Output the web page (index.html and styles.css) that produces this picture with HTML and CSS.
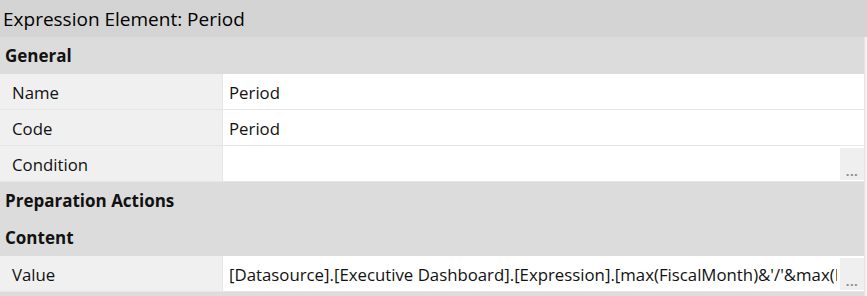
FILE: index.html
```html
<!DOCTYPE html>
<html>
<head>
<meta charset="utf-8">
<link rel="stylesheet" href="styles.css">
</head>
<body>
<div class="title">Expression Element: Period</div>
<div class="body">
  <div class="grid">
    <div class="section">General</div>
    <div class="row"><div class="label">Name</div><div class="value">Period</div></div>
    <div class="row"><div class="label">Code</div><div class="value">Period</div></div>
    <div class="row"><div class="label">Condition</div><div class="value"><span class="text"></span><span class="more">...</span></div></div>
    <div class="section">Preparation Actions</div>
    <div class="section">Content</div>
    <div class="row"><div class="label">Value</div><div class="value"><span class="text">[Datasource].[Executive Dashboard].[Expression].[max(FiscalMonth)&amp;'/'&amp;max(FiscalYear)]</span><span class="more">...</span></div></div>
    <div class="foot"></div>
  </div>
  <div class="scroll"></div>
</div>
</body>
</html>
```
FILE: styles.css
```css
html, body { margin: 0; padding: 0; }
body {
  width: 867px;
  height: 296px;
  overflow: hidden;
  font-family: "Open Sans", "Noto Sans", sans-serif;
  color: #111;
  background: #dcdcdc;
}
.title {
  height: 37px;
  background: #d4d4d4;
  font-size: 19px;
  font-weight: 500;
  line-height: 38px;
  padding-left: 3px;
  color: #000;
}
.body { display: flex; }
.grid { width: 864px; display: flex; flex-direction: column; }
.scroll { width: 3px; background: #f3f3f3; border-left: 1px solid #e4e4e4; box-sizing: border-box; }
.section {
  height: 37px;
  line-height: 38px;
  background: #dcdcdc;
  font-weight: bold;
  font-size: 17px;
  padding-left: 5px;
}
.row {
  display: flex;
  height: 36px;
  border-bottom: 1px solid #e6e6e6;
  box-sizing: border-box;
  font-size: 16.8px;
}
.label {
  width: 223px;
  background: #f0f0f0;
  border-right: 1px solid #e6e6e6;
  padding-left: 12px;
  line-height: 37px;
  box-sizing: border-box;
  flex: none;
}
.value {
  flex: 1;
  background: #fff;
  display: flex;
  padding-left: 6px;
  line-height: 37px;
  overflow: hidden;
  min-width: 0;
}
.text { flex: 1; white-space: nowrap; overflow: hidden; min-width: 0; margin-right: 3px; }
.more {
  flex: none;
  width: 24px;
  margin: 2px 0 1px 0;
  background: #efefef;
  color: #8a8a8a;
  font-size: 13px;
  font-weight: bold;
  line-height: 12px;
  letter-spacing: 0.5px;
  display: flex;
  align-items: flex-end;
  justify-content: center;
  padding-bottom: 3px;
  box-sizing: border-box;
}
.foot { height: 5px; background: #dcdcdc; }
```
